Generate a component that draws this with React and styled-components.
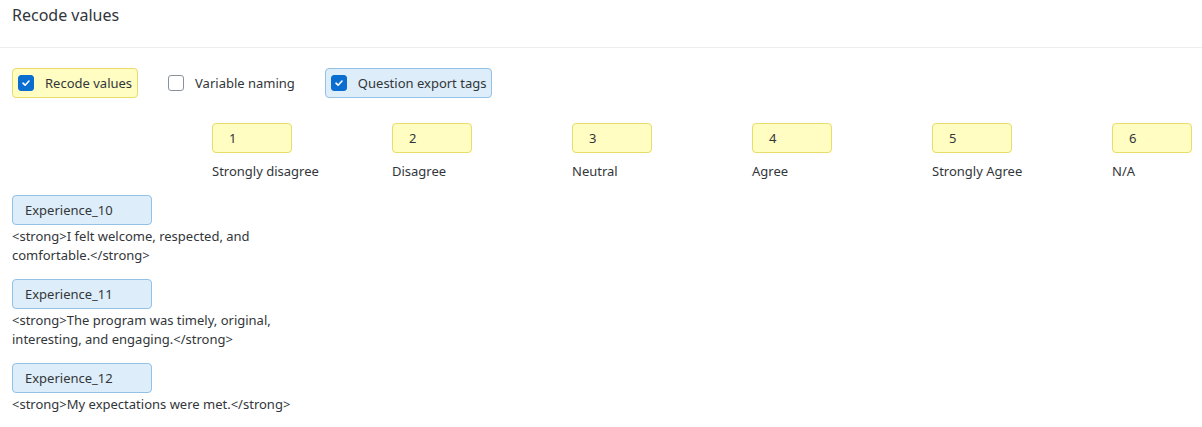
import React from "react";
import styled, { createGlobalStyle } from "styled-components";

const Global = createGlobalStyle`
  html, body { margin: 0; padding: 0; background: #fff; }
  body { font-family: "Noto Sans", "Open Sans", sans-serif; color: #32363a; }
`;

const Page = styled.div`
  width: 1202px;
  overflow: hidden;
`;

const Header = styled.div`
  height: 48px;
  border-bottom: 1px solid #ededed;
  padding: 4px 12px 0;
  box-sizing: border-box;
`;

const Title = styled.h1`
  margin: 0;
  font-size: 16px;
  font-weight: 400;
  line-height: 22px;
  color: #32363a;
`;

const Body = styled.div`
  padding: 20px 12px 0;
`;

const Options = styled.div`
  display: flex;
  align-items: center;
  gap: 24px;
  height: 30px;
`;

const Pill = styled.label`
  display: flex;
  align-items: center;
  gap: 11px;
  height: 30px;
  box-sizing: border-box;
  padding: 0 5px 0 5px;
  border-radius: 4px;
  font-size: 13px;
  border: 1px solid ${(p) => (p.$tone === "yellow" ? "#e8dc6a" : p.$tone === "blue" ? "#93c2e6" : "transparent")};
  background: ${(p) => (p.$tone === "yellow" ? "#fffdc2" : p.$tone === "blue" ? "#ddedf9" : "transparent")};
`;

const Box = styled.span`
  width: 16px;
  height: 16px;
  box-sizing: border-box;
  border-radius: 3px;
  display: inline-flex;
  align-items: center;
  justify-content: center;
  background: ${(p) => (p.$checked ? "#0a6ed1" : "#fff")};
  border: 1px solid ${(p) => (p.$checked ? "#0a6ed1" : "#89919a")};
`;

const Check = ({ checked }) => (
  <Box $checked={checked}>
    {checked && (
      <svg width="10" height="10" viewBox="0 0 10 10">
        <path d="M2 5.2 L4.1 7.2 L8 3" fill="none" stroke="#fff" strokeWidth="1.6" strokeLinecap="round" strokeLinejoin="round" />
      </svg>
    )}
  </Box>
);

const Scale = styled.div`
  display: grid;
  grid-template-columns: repeat(5, 180px) 80px;
  margin: 25px 0 0 200px;
`;

const ScaleCol = styled.div`
  display: flex;
  flex-direction: column;
  gap: 9px;
`;

const ValueBox = styled.div`
  width: 80px;
  height: 30px;
  box-sizing: border-box;
  border: 1px solid #e8dc6a;
  background: #fffdc2;
  border-radius: 4px;
  padding-left: 16px;
  display: flex;
  align-items: center;
  font-size: 13px;
`;

const ScaleLabel = styled.div`
  font-size: 13px;
  line-height: 18px;
  white-space: nowrap;
`;

const Questions = styled.div`
  margin-top: 15px;
  display: flex;
  flex-direction: column;
  gap: 14px;
`;

const Question = styled.div`
  display: flex;
  flex-direction: column;
  gap: 2px;
`;

const Tag = styled.div`
  width: 140px;
  height: 30px;
  box-sizing: border-box;
  border: 1px solid #93c2e6;
  background: #ddedf9;
  border-radius: 4px;
  padding-left: 12px;
  display: flex;
  align-items: center;
  font-size: 13px;
`;

const QText = styled.div`
  width: 290px;
  font-size: 13px;
  line-height: 19px;
`;

const scale = [
  ["1", "Strongly disagree"],
  ["2", "Disagree"],
  ["3", "Neutral"],
  ["4", "Agree"],
  ["5", "Strongly Agree"],
  ["6", "N/A"],
];

const questions = [
  ["Experience_10", "<strong>I felt welcome, respected, and comfortable.</strong>"],
  ["Experience_11", "<strong>The program was timely, original, interesting, and engaging.</strong>"],
  ["Experience_12", "<strong>My expectations were met.</strong>"],
];

export default function App() {
  return (
    <Page>
      <Global />
      <Header>
        <Title>Recode values</Title>
      </Header>
      <Body>
        <Options>
          <Pill $tone="yellow">
            <Check checked />
            Recode values
          </Pill>
          <Pill>
            <Check checked={false} />
            Variable naming
          </Pill>
          <Pill $tone="blue">
            <Check checked />
            Question export tags
          </Pill>
        </Options>
        <Scale>
          {scale.map(([v, l]) => (
            <ScaleCol key={v}>
              <ValueBox>{v}</ValueBox>
              <ScaleLabel>{l}</ScaleLabel>
            </ScaleCol>
          ))}
        </Scale>
        <Questions>
          {questions.map(([t, q]) => (
            <Question key={t}>
              <Tag>{t}</Tag>
              <QText>{q}</QText>
            </Question>
          ))}
        </Questions>
      </Body>
    </Page>
  );
}
